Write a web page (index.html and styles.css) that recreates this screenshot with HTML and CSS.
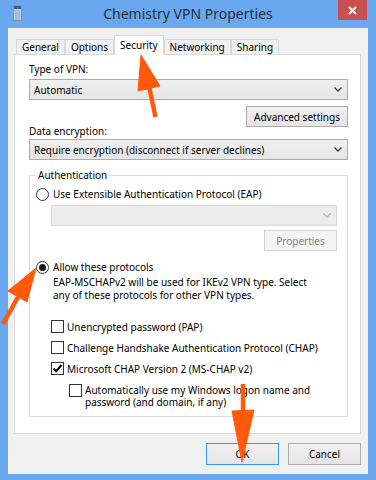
FILE: index.html
```html
<!DOCTYPE html>
<html lang="en">
<head>
  <meta charset="UTF-8" />
  <title>Chemistry VPN Properties</title>
  <link rel="stylesheet" href="styles.css">
</head>
<body>
  <div class="window">
    <!-- Title bar -->
    <div class="titlebar">
      <svg class="app-icon" width="9" height="16" viewBox="0 0 9 16">
        <rect x="0.5" y="0.5" width="8" height="15" fill="#c9d5e0" stroke="#7f96ad" />
        <rect x="1" y="1" width="7" height="3" fill="#3f6185" />
        <path d="M1.5 6h6M1.5 8h6M1.5 10h6M1.5 12h6M1.5 14h6" stroke="#8ba2b8" stroke-width="1" />
      </svg>
      <div class="title">Chemistry VPN Properties</div>
      <div class="close">
        <svg width="9" height="9" viewBox="0 0 9 9">
          <path d="M1 1L8 8M8 1L1 8" stroke="#fff" stroke-width="2" />
        </svg>
      </div>
    </div>

    <!-- Dialog body -->
    <div class="client">
      <div class="tabs">
        <div class="tab">General</div>
        <div class="tab">Options</div>
        <div class="tab active">Security</div>
        <div class="tab">Networking</div>
        <div class="tab">Sharing</div>
      </div>

      <div class="panel">
        <div class="label">Type of VPN:</div>
        <div class="select">
          <span>Automatic</span>
          <svg class="chevron" width="8" height="5" viewBox="0 0 8 5"><path d="M0.5 0.5L4 4L7.5 0.5" /></svg>
        </div>

        <div class="adv-row">
          <div class="label">Data encryption:</div>
          <button class="btn adv">Advanced settings</button>
        </div>
        <div class="select">
          <span>Require encryption (disconnect if server declines)</span>
          <svg class="chevron" width="8" height="5" viewBox="0 0 8 5"><path d="M0.5 0.5L4 4L7.5 0.5" /></svg>
        </div>

        <fieldset class="group">
          <legend>Authentication</legend>
          <div class="option"><span class="radio"></span>Use Extensible Authentication Protocol (EAP)</div>
          <div class="select disabled">
            <span></span>
            <svg class="chevron" width="8" height="5" viewBox="0 0 8 5"><path d="M0.5 0.5L4 4L7.5 0.5" /></svg>
          </div>
          <div class="props-row"><button class="btn disabled">Properties</button></div>

          <div class="option second"><span class="radio checked"></span>Allow these protocols</div>
          <p class="note">EAP-MSCHAPv2 will be used for IKEv2 VPN type. Select<br>any of these protocols for other VPN types.</p>

          <div class="checks">
            <div class="check-row"><span class="box"></span>Unencrypted password (PAP)</div>
            <div class="check-row"><span class="box"></span>Challenge Handshake Authentication Protocol (CHAP)</div>
            <div class="check-row">
              <span class="box">
                <svg width="11" height="11" viewBox="0 0 11 11"><path d="M1.5 5.5L4.2 8.2L9.5 2" /></svg>
              </span>Microsoft CHAP Version 2 (MS-CHAP v2)
            </div>
            <div class="check-row sub"><span class="box"></span><span>Automatically use my Windows logon name and<br>password (and domain, if any)</span></div>
          </div>
        </fieldset>
      </div>

      <div class="actions">
        <button class="btn default">OK</button>
        <button class="btn">Cancel</button>
      </div>
    </div>

    <!-- Annotation arrows -->
    <svg class="arrows" width="376" height="480" viewBox="0 0 376 480">
      <g fill="#ff5a0a" stroke="#ff5a0a">
        <line x1="155.5" y1="117" x2="149" y2="86" stroke-width="4.5" />
        <polygon points="141,55 138,91 160,86" stroke-width="1" />
        <line x1="3" y1="324" x2="18" y2="297" stroke-width="4.5" />
        <polygon points="36,268 8,291 27,302" stroke-width="1" />
        <line x1="243" y1="384" x2="243" y2="414" stroke-width="4.5" />
        <polygon points="242,462 232,411 254,410" stroke-width="1" />
      </g>
    </svg>
  </div>
</body>
</html>
```

FILE: styles.css
```css
* {
  box-sizing: border-box;
}
body {
  margin: 0;
  font-family: "Noto Sans", "DejaVu Sans", sans-serif;
  font-size: 10px;
  color: #000;
  background-color: #69a7ee;
}
.window {
  position: relative;
  width: 376px;
  height: 480px;
  background-color: #69a7ee;
  display: flex;
  flex-direction: column;
  padding-bottom: 6px;
}
.titlebar {
  height: 30px;
  display: grid;
  grid-template-columns: 1fr auto 1fr;
  align-items: start;
}
.app-icon {
  margin: 5px 0 0 13px;
}
.title {
  font-size: 14px;
  line-height: 18px;
  padding-top: 5px;
  color: #27313c;
}
.close {
  justify-self: end;
  width: 29px;
  height: 20px;
  margin-right: 9px;
  background-color: #c75050;
  display: flex;
  align-items: center;
  justify-content: center;
}
.client {
  flex: 1;
  margin: 0 8px;
  background-color: #f0f0f0;
  padding: 7px 7px 9px 6px;
  display: flex;
  flex-direction: column;
}
.tabs {
  display: flex;
  align-items: flex-end;
  height: 19px;
  margin-left: 2px;
}
.tab {
  height: 15px;
  line-height: 14px;
  padding: 0 5px;
  border: 1px solid #d9d9d9;
  border-bottom: none;
  background-color: #f0f0f0;
  white-space: nowrap;
}
.tab.active {
  height: 20px;
  margin-bottom: -1px;
  padding-top: 2px;
  background-color: #fff;
  position: relative;
  z-index: 1;
}
.panel {
  height: 380px;
  background-color: #fff;
  border: 1px solid #d9d9d9;
  padding: 7px 12px 0 14px;
}
.label {
  line-height: 15px;
}
.panel > .label {
  margin-bottom: 2px;
}
.select {
  height: 21px;
  border: 1px solid #acacac;
  background: linear-gradient(#f0f0f0, #e5e5e5);
  display: flex;
  align-items: center;
  justify-content: space-between;
  padding: 0 5px 0 4px;
  white-space: nowrap;
}
.chevron path {
  fill: none;
  stroke: #3c3c3c;
  stroke-width: 1.3;
}
.select.disabled {
  margin: 3px 0 0 15px;
  border-color: #d9d9d9;
  background: #ececec;
}
.select.disabled .chevron path {
  stroke: #b5b5b5;
}
.adv-row {
  height: 33px;
  margin-top: 6px;
  display: flex;
  justify-content: space-between;
  align-items: flex-start;
}
.adv-row .label {
  align-self: flex-end;
}
.btn {
  font-family: inherit;
  font-size: 10px;
  color: #000;
  height: 21px;
  padding: 0 7px;
  border: 1px solid #acacac;
  background: linear-gradient(#f0f0f0, #e5e5e5);
  border-radius: 0;
}
.btn.adv {
  width: 102px;
}
.btn.disabled {
  width: 73px;
  color: #838383;
  border-color: #d5d5d5;
  background: #f4f4f4;
}
.group {
  margin: 8px 0 0;
  padding: 5px 10px 8px 6px;
  border: 1px solid #dcdcdc;
  min-width: 0;
}
.group legend {
  padding: 0 2px;
  line-height: 14px;
}
.option {
  display: flex;
  align-items: center;
  gap: 4px;
  line-height: 15px;
}
.option.second {
  margin-top: 9px;
}
.radio {
  width: 13px;
  height: 13px;
  border: 1px solid #333;
  border-radius: 50%;
  background-color: #fff;
  display: inline-flex;
  align-items: center;
  justify-content: center;
}
.radio.checked::after {
  content: "";
  width: 7px;
  height: 7px;
  border-radius: 50%;
  background-color: #1a1a1a;
}
.props-row {
  display: flex;
  justify-content: flex-end;
  margin-top: 4px;
}
.note {
  margin: 1px 0 0 17px;
  line-height: 13px;
}
.checks {
  margin: 14px 0 0 15px;
}
.check-row {
  height: 21px;
  display: flex;
  align-items: center;
  gap: 3px;
  white-space: nowrap;
}
.check-row.sub {
  height: auto;
  align-items: flex-start;
  margin: 5px 0 0 18px;
  line-height: 12px;
}
.box {
  flex-shrink: 0;
  width: 13px;
  height: 13px;
  border: 1px solid #333;
  background-color: #fff;
  display: inline-flex;
  align-items: center;
  justify-content: center;
}
.box path {
  fill: none;
  stroke: #000;
  stroke-width: 2;
}
.actions {
  display: flex;
  justify-content: flex-end;
  gap: 9px;
  margin-top: 9px;
}
.actions .btn {
  width: 73px;
  height: 22px;
}
.btn.default {
  border-color: #3399ff;
}
.arrows {
  position: absolute;
  top: 0;
  left: 0;
  pointer-events: none;
}
```
